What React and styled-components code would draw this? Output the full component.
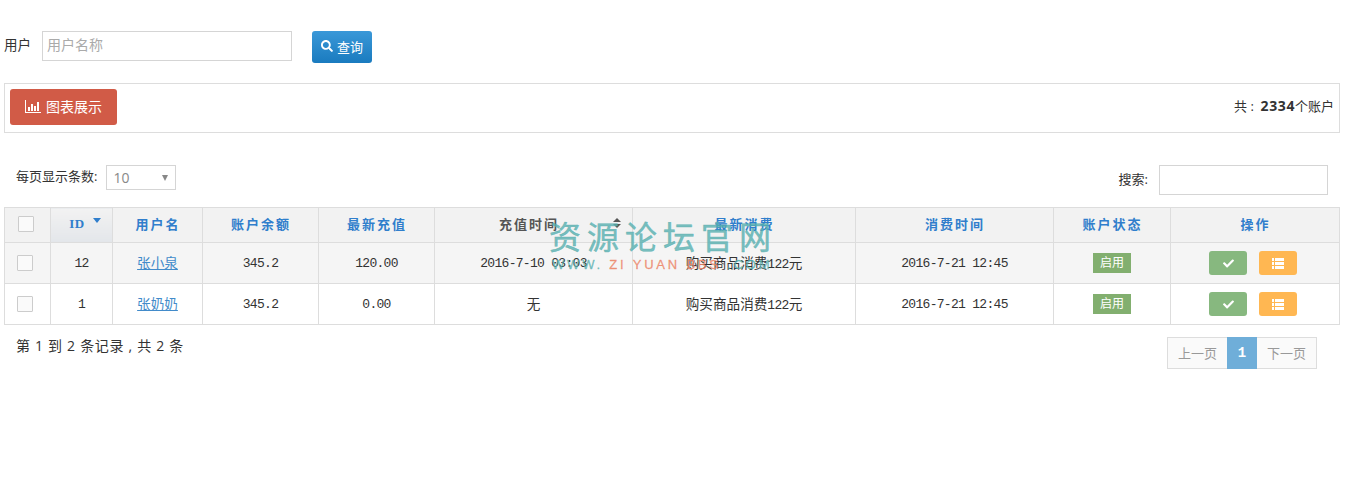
import React from 'react';
import styled, { createGlobalStyle } from 'styled-components';
import { FaCheck, FaSearch } from 'react-icons/fa';

const GlobalStyle = createGlobalStyle`
  body {
    margin: 0;
    background: #fff;
    color: #333;
    font-family: "Open Sans", "Noto Sans CJK SC", sans-serif;
    font-size: 13px;
  }
`;

const Page = styled.div`
  position: relative;
  width: 1348px;
  height: 491px;
  padding: 31px 8px 0 4px;
  box-sizing: border-box;
  overflow: hidden;
`;

const SearchForm = styled.div`
  display: flex;
  align-items: flex-start;
  height: 32px;
`;

const FormLabel = styled.label`
  width: 38px;
  line-height: 28px;
  font-size: 13.5px;
`;

const TextInput = styled.input`
  width: ${p => p.$w}px;
  height: ${p => p.$h}px;
  box-sizing: border-box;
  border: 1px solid #d5d5d5;
  padding: 0 4px 4px;
  font-family: inherit;
  font-size: 14px;
  outline: none;
  &::placeholder { color: #aaa; }
`;

const SearchButton = styled.button`
  margin-left: 20px;
  width: 60px;
  height: 32px;
  padding: 0 0 2px;
  display: flex;
  align-items: center;
  justify-content: center;
  gap: 4px;
  border: 0;
  border-radius: 3px;
  color: #fff;
  font-family: inherit;
  font-size: 13px;
  background: linear-gradient(#3a98d8, #1a7bbf);
`;

const Toolbar = styled.div`
  margin-top: 20px;
  height: 50px;
  box-sizing: border-box;
  border: 1px solid #ddd;
  padding: 5px 5px 0;
  display: flex;
  align-items: flex-start;
  justify-content: space-between;
`;

const ChartButton = styled.button`
  width: 107px;
  height: 36px;
  padding: 0 0 2px;
  display: flex;
  align-items: center;
  justify-content: center;
  gap: 5px;
  border: 0;
  border-radius: 3px;
  background: #d15b47;
  color: #fff;
  font-family: inherit;
  font-size: 14px;
`;

const Total = styled.div`
  font-size: 13px;
  line-height: 34px;
  white-space: pre;
  b { font-size: 14px; letter-spacing: 0.6px; font-family: "Open Sans", sans-serif; }
`;

const Controls = styled.div`
  margin-top: 32px;
  height: 42px;
  padding: 0 12px;
  display: flex;
  justify-content: space-between;
  align-items: flex-start;
`;

const LengthLabel = styled.div`
  display: flex;
  align-items: flex-start;
  gap: 9px;
  font-size: 13px;
  line-height: 22px;
`;

const FakeSelect = styled.div`
  width: 70px;
  height: 25px;
  box-sizing: border-box;
  border: 1px solid #d5d5d5;
  padding: 0 7px 0 6px;
  display: flex;
  align-items: center;
  justify-content: space-between;
  color: #888;
  font-size: 14px;
`;

const Caret = styled.span`
  border: 3px solid transparent;
  border-top: 6px solid #888;
  border-bottom: 0;
`;

const SearchBox = styled.div`
  display: flex;
  align-items: flex-start;
  gap: 11px;
  font-size: 13px;
  line-height: 28px;
`;

const DataTable = styled.table`
  width: 1336px;
  table-layout: fixed;
  border-collapse: collapse;
  border: 1px solid #ddd;
`;

const HeadCell = styled.th`
  height: 35px;
  padding: 0 ${p => (p.$plain ? 10 : 0)}px 3px 1px;
  box-sizing: border-box;
  border: 1px solid #ddd;
  background: ${p => (p.$sorted ? 'linear-gradient(#f2f2f2, #e3e6ea)' : '#f2f2f2')};
  color: ${p => (p.$plain ? '#555' : '#307ecc')};
  font-family: "Liberation Serif", "Noto Sans CJK SC", serif;
  font-size: 13px;
  font-weight: 700;
  letter-spacing: 2px;
  position: relative;
`;

const IdLabel = styled.span`
  display: inline-block;
  margin-right: 10px;
  letter-spacing: 0.5px;
`;

const SortDown = styled.span`
  position: absolute;
  right: 11px;
  top: 10px;
  border: 4.5px solid transparent;
  border-top: 5px solid #307ecc;
  border-bottom: 0;
`;

const SortBoth = styled.span`
  position: absolute;
  right: 19px;
  top: 12px;
  width: 0;
  &::before, &::after {
    content: "";
    position: absolute;
    left: 0;
    border: 4px solid transparent;
  }
  &::before { top: -2px; border-top: 0; border-bottom: 4px solid #555; }
  &::after { top: 4px; border-bottom: 0; border-top: 4px solid #555; }
`;

const Row = styled.tr`
  background: ${p => (p.$odd ? '#f5f5f5' : '#fff')};
`;

const Cell = styled.td`
  height: 41px;
  padding: 0;
  box-sizing: border-box;
  border: 1px solid #ddd;
  text-align: center;
  font-family: "Liberation Mono", "Noto Sans CJK SC", monospace;
  font-size: 13px;
  letter-spacing: -0.7px;
  color: #333;
`;

const Cn = styled.span`
  font-family: "Noto Sans CJK SC", sans-serif;
  font-size: 13.6px;
  letter-spacing: 0;
  vertical-align: 2px;
`;

const Digits = styled.span`
  font-family: "Liberation Mono", monospace;
  font-size: 13px;
  letter-spacing: -0.7px;
`;

const NameLink = styled.a`
  color: #428bca;
  text-decoration: underline;
  font-family: "Noto Sans CJK SC", sans-serif;
  font-size: 13.6px;
  letter-spacing: 0;
  vertical-align: 2px;
`;

const Check = styled.span`
  display: inline-block;
  vertical-align: middle;
  width: 16px;
  height: 16px;
  margin-right: 5px;
  box-sizing: border-box;
  border: 1px solid #ccc;
  border-radius: 1px;
  background: #fafafa;
`;

const Badge = styled.span`
  display: inline-block;
  width: 38px;
  height: 20px;
  line-height: 17px;
  vertical-align: 2px;
  background: #82af6f;
  color: #fff;
  font-family: "Noto Sans CJK SC", sans-serif;
  font-size: 12px;
  letter-spacing: 0;
`;

const ActionRow = styled.div`
  display: flex;
  justify-content: center;
  gap: 12px;
  padding-right: 4px;
`;

const ActionButton = styled.button`
  width: 38px;
  height: 24px;
  padding: 0;
  border: 0;
  border-radius: 3px;
  display: flex;
  align-items: center;
  justify-content: center;
  color: #fff;
  font-size: 11px;
  background: ${p => p.$bg};
`;

const Footer = styled.div`
  margin-top: 12px;
  padding: 0 23px 0 12px;
  display: flex;
  justify-content: space-between;
  align-items: flex-start;
`;

const Info = styled.div`
  font-size: 14px;
  line-height: 18px;
  letter-spacing: 0.7px;
`;

const Pager = styled.div`
  display: flex;
  height: 32px;
  box-sizing: border-box;
  border: 1px solid #ddd;
  background: #fafafa;
  color: #999;
  font-size: 13px;
  line-height: 30px;
`;

const PageLink = styled.span`
  width: ${p => p.$w}px;
  text-align: center;
  ${p => p.$active && `
    margin: -1px 0;
    height: 32px;
    line-height: 32px;
    background: #6faed9;
    color: #fff;
    font-weight: 700;
    font-family: "Liberation Mono", monospace;
    font-size: 14px;
  `}
`;

const Watermark = styled.div`
  position: absolute;
  left: 549px;
  top: 215px;
  width: 230px;
  pointer-events: none;
  font-family: "Noto Sans CJK SC", sans-serif;
  color: rgba(85, 175, 175, 0.78);
`;

const MarkTitle = styled.div`
  font-size: 32px;
  line-height: 40px;
  letter-spacing: 6px;
  white-space: nowrap;
  -webkit-text-stroke: 0.5px rgba(85, 175, 175, 0.78);
`;

const MarkSub = styled.div`
  margin: 2px 0 0 3px;
  font-family: "Liberation Sans", sans-serif;
  font-size: 13px;
  line-height: 16px;
  letter-spacing: 2.8px;
  white-space: nowrap;
  -webkit-text-stroke: 0.3px currentColor;
`;

const Salmon = styled.span`
  color: rgba(236, 130, 100, 0.8);
`;

const widths = [46, 62, 90, 116, 116, 198, 223, 198, 117, 169];

const rows = [
  { id: 12, name: '张小泉', money: '345.2', pay: '120.00', payTime: '2016-7-10 03:03' },
  { id: 1, name: '张奶奶', money: '345.2', pay: '0.00', payTime: <Cn>无</Cn> },
];

const BarIcon = () => (
  <svg width="16" height="13" viewBox="0 0 16 13" fill="#fff">
    <path d="M0 0h1v12h15v1H0z" />
    <path d="M3 7h2v4H3zM6 4h2v7H6zM9 6h2v5H9zM12 2h2v9h-2z" />
  </svg>
);

const ListIcon = () => (
  <svg width="12" height="11" viewBox="0 0 12 11" fill="#fff">
    <path d="M0 0h2v3H0zM3 0h9v3H3zM0 4h2v3H0zM3 4h9v3H3zM0 8h2v3H0zM3 8h9v3H3z" />
  </svg>
);

export default function App() {
  return (
    <Page>
      <GlobalStyle />
      <SearchForm>
        <FormLabel>用户</FormLabel>
        <TextInput $w={250} $h={30} placeholder="用户名称" />
        <SearchButton><FaSearch size={12} />查询</SearchButton>
      </SearchForm>

      <Toolbar>
        <ChartButton><BarIcon />图表展示</ChartButton>
        <Total>共 :  <b>2334</b>个账户</Total>
      </Toolbar>

      <Controls>
        <LengthLabel>每页显示条数:<FakeSelect>10<Caret /></FakeSelect></LengthLabel>
        <SearchBox>搜索:<TextInput $w={169} $h={30} /></SearchBox>
      </Controls>

      <DataTable>
        <colgroup>
          {widths.map((w, i) => <col key={i} width={w} />)}
        </colgroup>
        <thead>
          <tr>
            <HeadCell><Check /></HeadCell>
            <HeadCell $sorted><IdLabel>ID</IdLabel><SortDown /></HeadCell>
            <HeadCell>用户名</HeadCell>
            <HeadCell>账户余额</HeadCell>
            <HeadCell>最新充值</HeadCell>
            <HeadCell $plain>充值时间<SortBoth /></HeadCell>
            <HeadCell>最新消费</HeadCell>
            <HeadCell>消费时间</HeadCell>
            <HeadCell>账户状态</HeadCell>
            <HeadCell>操作</HeadCell>
          </tr>
        </thead>
        <tbody>
          {rows.map((r, i) => (
            <Row key={r.id} $odd={i === 0}>
              <Cell><Check /></Cell>
              <Cell>{r.id}</Cell>
              <Cell><NameLink href="#">{r.name}</NameLink></Cell>
              <Cell>{r.money}</Cell>
              <Cell>{r.pay}</Cell>
              <Cell>{r.payTime}</Cell>
              <Cell><Cn>购买商品消费<Digits>122</Digits>元</Cn></Cell>
              <Cell>2016-7-21 12:45</Cell>
              <Cell><Badge>启用</Badge></Cell>
              <Cell>
                <ActionRow>
                  <ActionButton $bg="#87b87f"><FaCheck /></ActionButton>
                  <ActionButton $bg="#ffb752"><ListIcon /></ActionButton>
                </ActionRow>
              </Cell>
            </Row>
          ))}
        </tbody>
      </DataTable>

      <Footer>
        <Info>第 1 到 2 条记录 , 共 2 条</Info>
        <Pager>
          <PageLink $w={59}>上一页</PageLink>
          <PageLink $w={30} $active>1</PageLink>
          <PageLink $w={59}>下一页</PageLink>
        </Pager>
      </Footer>

      <Watermark>
        <MarkTitle>资源论坛官网</MarkTitle>
        <MarkSub>WWW. <Salmon>ZI YUAN BBS</Salmon> .COM</MarkSub>
      </Watermark>
    </Page>
  );
}
